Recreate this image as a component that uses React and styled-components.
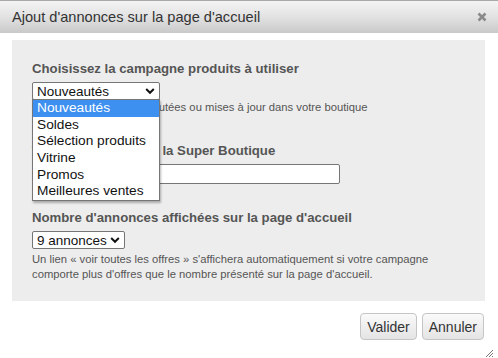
import React from 'react'
import styled, { createGlobalStyle } from 'styled-components'

const Global = createGlobalStyle`
  html, body {
    margin: 0;
    padding: 0;
    background: #fff;
    font-family: "Liberation Sans", Arial, sans-serif;
  }
`

const Dialog = styled.div`
  position: relative;
  width: 498px;
  height: 358px;
  background: #fff;
  border-top: 1px solid #a8a8a8;
  box-sizing: border-box;
`

const TitleBar = styled.div`
  display: flex;
  align-items: center;
  justify-content: space-between;
  height: 32px;
  padding: 0 10px 0 12px;
  background: linear-gradient(to bottom, #f4f4f4 0%, #e2e2e2 50%, #c9c9c9 100%);
  color: #333;
  font-size: 14.6px;
`

const Close = styled.span`
  display: flex;
  width: 12px;
  height: 12px;
  align-items: center;
  justify-content: center;
`

const Body = styled.div`
  padding: 7px 13px 0 12px;
`

const Panel = styled.div`
  background: #ededed;
  padding: 20px 20px 19px;
`

const Section = styled.div`
  position: relative;
  margin-bottom: ${p => p.gap || 0}px;
`

const Heading = styled.div`
  font-size: 13.2px;
  font-weight: bold;
  color: #555;
  line-height: 17px;
  margin-bottom: 5px;
`

const Select = styled.div`
  display: flex;
  align-items: center;
  justify-content: space-between;
  box-sizing: border-box;
  width: ${p => p.w}px;
  height: 18px;
  padding: 0 4px 0 4px;
  background: #fff;
  border: 1px solid #767676;
  border-radius: 2px;
  font-size: 13.5px;
  color: #111;
`

const Help = styled.div`
  font-size: 11.25px;
  color: #555;
  line-height: ${p => p.lh || 14}px;
  margin-top: ${p => p.mt || 0}px;
`

const Listbox = styled.div`
  position: absolute;
  left: 0;
  top: 39px;
  width: 128px;
  box-sizing: border-box;
  background: #fff;
  border: 1px solid #767676;
  box-shadow: 1px 2px 2px rgba(0, 0, 0, 0.28);
  z-index: 2;
`

const Option = styled.div`
  height: 16.7px;
  line-height: 16.7px;
  padding: 0 4px;
  font-size: 13.7px;
  color: ${p => (p.active ? '#fff' : '#111')};
  background: ${p => (p.active ? '#3d8ff0' : '#fff')};
`

const TextInput = styled.div`
  box-sizing: border-box;
  width: 308px;
  height: 20px;
  background: #fff;
  border: 1px solid #767676;
  border-radius: 2px;
`

const Footer = styled.div`
  display: flex;
  justify-content: flex-end;
  gap: 5px;
  padding: 12px 1px 0 0;
`

const Button = styled.div`
  display: flex;
  align-items: center;
  justify-content: center;
  box-sizing: border-box;
  height: 27px;
  padding: 0 6px;
  border: 1px solid #c5c5c5;
  border-radius: 4px;
  background: linear-gradient(to bottom, #fafafa, #e4e4e4);
  color: #333;
  font-size: 14px;
`

const Grip = styled.div`
  position: absolute;
  right: 4px;
  bottom: 5px;
  width: 9px;
  height: 9px;
`

const Chevron = () => (
  <svg width="10" height="8" viewBox="0 0 10 8">
    <path d="M1.2 2 L5 5.8 L8.8 2" fill="none" stroke="#111" strokeWidth="2" />
  </svg>
)

const options = [
  'Nouveautés',
  'Soldes',
  'Sélection produits',
  'Vitrine',
  'Promos',
  'Meilleures ventes',
]

export default function App() {
  return (
    <>
      <Global />
      <Dialog>
        <TitleBar>
          <span>Ajout d'annonces sur la page d'accueil</span>
          <Close>
            <svg width="10" height="10" viewBox="0 0 10 10">
              <path d="M1.5 1.5 L8.5 8.5 M8.5 1.5 L1.5 8.5" stroke="#8a8a8a" strokeWidth="2.6" />
            </svg>
          </Close>
        </TitleBar>
        <Body>
          <Panel>
            <Section gap={28}>
              <Heading>Choisissez la campagne produits à utiliser</Heading>
              <Select w={128}>
                <span>Nouveautés</span>
                <Chevron />
              </Select>
              <Help>Les offres récemment ajoutées ou mises à jour dans votre boutique</Help>
              <Listbox>
                {options.map((o, i) => (
                  <Option key={o} active={i === 0}>
                    {o}
                  </Option>
                ))}
              </Listbox>
            </Section>
            <Section gap={25}>
              <Heading>Texte de l'encart sur la Super Boutique</Heading>
              <TextInput />
            </Section>
            <Section>
              <Heading>Nombre d'annonces affichées sur la page d'accueil</Heading>
              <Select w={93}>
                <span>9 annonces</span>
                <Chevron />
              </Select>
              <Help lh={15} mt={3}>
                Un lien « voir toutes les offres » s'affichera automatiquement si votre campagne
                <br />
                comporte plus d'offres que le nombre présenté sur la page d'accueil.
              </Help>
            </Section>
          </Panel>
          <Footer>
            <Button>Valider</Button>
            <Button>Annuler</Button>
          </Footer>
        </Body>
        <Grip>
          <svg width="9" height="9" viewBox="0 0 9 9">
            <path d="M8 1 L1 8 M8 4 L4 8 M8 7 L7 8" stroke="#777" strokeWidth="1" />
          </svg>
        </Grip>
      </Dialog>
    </>
  )
}
